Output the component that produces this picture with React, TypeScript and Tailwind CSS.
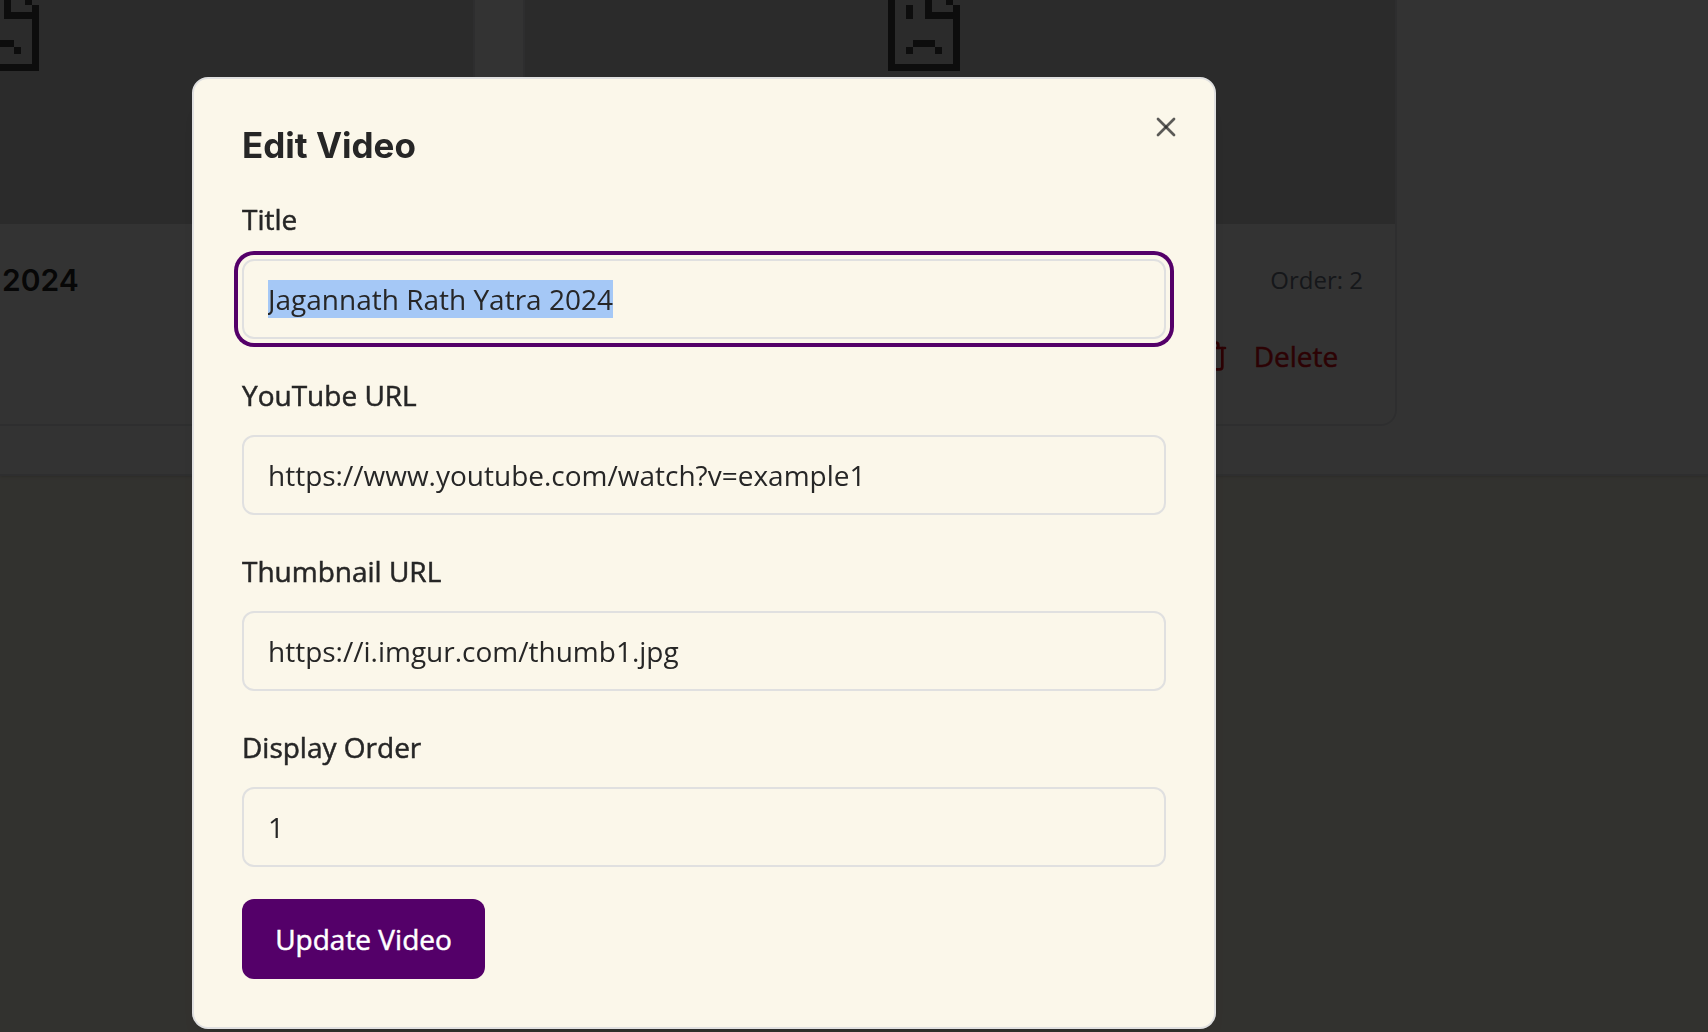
import { useEffect, useRef } from "react";
import { Trash, X } from "lucide-react";

function BrokenImage({ className }: { className: string }) {
  return (
    <svg viewBox="0 0 72 71" shapeRendering="crispEdges" fill="#414141" aria-hidden="true" className={className}>
      <path d="M0 0h7v64h58V19H37V0h7v12h21V5h7v66H0z" />
      <path d="M58 0h7v5h-7zM18 5h7v14h-7zM25 40h22v7H25zM18 47h7v7h-7zM47 47h7v7h-7z" />
    </svg>
  );
}

function Background() {
  return (
    <main className="min-h-screen bg-[#fbf7ea]">
      <section className="flex gap-12 border-b-2 border-[#e5e7eb] bg-white pb-12 shadow-sm">
        <article className="h-[426px] w-[475px] shrink-0 overflow-hidden rounded-br-2xl border-r-2 border-b-2 border-[#e5e7eb]">
          <div className="h-56 bg-[#d7d7d7]">
            <div className="w-[39px] overflow-hidden">
              <BrokenImage className="float-right h-[71px] w-[72px] max-w-none" />
            </div>
          </div>
          <h3 className="pt-8 pl-0.5 font-['Inter'] text-[30px] leading-[48px] font-semibold text-[#262626]">2024</h3>
        </article>
        <article className="flex h-[426px] w-[874px] shrink-0 flex-col overflow-hidden rounded-b-2xl border-2 border-t-0 border-[#e5e7eb]">
          <div className="h-56 shrink-0 bg-[#d7d7d7] pl-[363px]">
            <BrokenImage className="h-[71px] w-[72px]" />
          </div>
          <div className="flex grow flex-col items-end justify-between p-8">
            <p className="text-2xl leading-[48px] text-[#6b7280]">Order: 2</p>
            <button
              type="button"
              className="flex h-[72px] items-center gap-6 px-6 text-[28px] font-medium text-[#dc0a14] [-webkit-text-stroke:0.5px_currentColor]"
            >
              <Trash size={32} aria-hidden="true" />
              <span className="min-w-[86px]">Delete</span>
            </button>
          </div>
        </article>
      </section>
    </main>
  );
}

const fields = [
  { id: "title", label: "Title", value: "Jagannath Rath Yatra 2024" },
  { id: "youtube", label: "YouTube URL", value: "https://www.youtube.com/watch?v=example1" },
  { id: "thumbnail", label: "Thumbnail URL", value: "https://i.imgur.com/thumb1.jpg" },
  { id: "order", label: "Display Order", value: "1" },
];

export default function App() {
  const titleRef = useRef<HTMLInputElement>(null);

  useEffect(() => {
    titleRef.current?.focus();
    titleRef.current?.select();
  }, []);

  return (
    <div className="font-['Open_Sans',sans-serif] text-[#262626]">
      <Background />
      <div className="fixed inset-0 overflow-hidden bg-black/80 pt-[77px] pr-12 pl-48">
        <div
          role="dialog"
          aria-modal="true"
          aria-labelledby="dialog-title"
          className="relative max-w-5xl rounded-2xl border-2 border-[#e0e0e0] bg-[#fbf7ea] p-12 shadow-[0_20px_30px_-6px_rgb(0_0_0/0.1),0_8px_12px_-8px_rgb(0_0_0/0.1)]"
        >
          <h2 id="dialog-title" className="font-['Inter'] text-[35px] leading-9 font-bold">
            Edit Video
          </h2>
          <form className="mt-8 flex flex-col items-start gap-8" onSubmit={(e) => e.preventDefault()}>
            {fields.map((f, i) => (
              <div key={f.id} className="flex w-full flex-col gap-4">
                <label
                  htmlFor={f.id}
                  className="text-[28px] leading-[48px] font-medium [-webkit-text-stroke:0.5px_currentColor]"
                >
                  {f.label}
                </label>
                <input
                  ref={i === 0 ? titleRef : undefined}
                  id={f.id}
                  type="text"
                  defaultValue={f.value}
                  className="h-20 w-full rounded-xl border-2 border-[#e0e0e0] bg-[#fbf7ea] px-6 text-[28px] ring-offset-4 ring-offset-[#fbf7ea] outline-none selection:bg-[#a5c8f6] selection:text-[#262626] focus:ring-4 focus:ring-[#540069]"
                />
              </div>
            ))}
            <button
              type="submit"
              className="h-20 min-w-[243px] rounded-xl bg-[#540069] px-8 text-[28px] font-medium text-white [-webkit-text-stroke:0.5px_currentColor]"
            >
              Update Video
            </button>
          </form>
          <button type="button" aria-label="Close" className="absolute top-8 right-8 text-[#262626]/75">
            <X size={32} />
          </button>
        </div>
      </div>
    </div>
  );
}
